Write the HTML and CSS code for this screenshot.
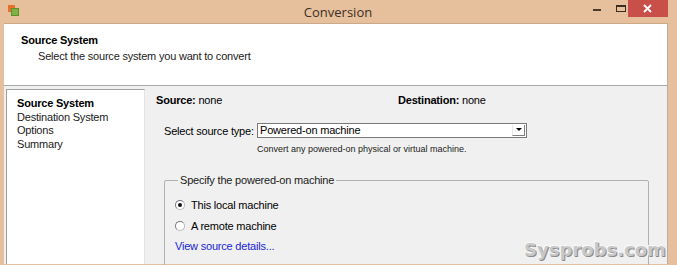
FILE: index.html
```html
<!DOCTYPE html>
<html lang="en">
<head>
    <meta charset="UTF-8">
    <title>Conversion</title>
    <link rel="stylesheet" href="styles.css">
</head>
<body>

<div class="window">
    <div class="titlebar">
        <div class="app-icon"><span class="sq-a"></span><span class="sq-b"></span></div>
        <div class="title">Conversion</div>
        <div class="controls">
            <svg class="caption-buttons" width="84" height="17" viewBox="0 0 84 17">
                <rect x="9" y="9" width="8" height="2" fill="#4a3a2c"/>
                <rect x="32.5" y="5.5" width="9" height="6" fill="none" stroke="#3b2c20" stroke-width="1"/>
                <rect x="32" y="5" width="10" height="2" fill="#3b2c20"/>
                <rect x="44" y="0" width="40" height="17" fill="#c94f4a"/>
                <path d="M60 5 L67 12 M67 5 L60 12" stroke="#ffffff" stroke-width="1.8" fill="none"/>
            </svg>
        </div>
    </div>

    <div class="client">
        <div class="header">
            <h1>Source System</h1>
            <p>Select the source system you want to convert</p>
        </div>

        <div class="main">
            <ul class="steps">
                <li class="current">Source System</li>
                <li>Destination System</li>
                <li>Options</li>
                <li>Summary</li>
            </ul>

            <div class="content">
                <div class="summary-row">
                    <span class="src"><b>Source:</b> none</span>
                    <span class="dst"><b>Destination:</b> none</span>
                </div>

                <div class="type-row">
                    <label for="source_type">Select source type:</label>
                    <div class="combo">
                        <span class="combo-value">Powered-on machine</span>
                        <span class="combo-arrow"></span>
                    </div>
                </div>
                <div class="hint">Convert any powered-on physical or virtual machine.</div>

                <fieldset class="machine">
                    <legend>Specify the powered-on machine</legend>
                    <div class="radio-row"><span class="radio checked"></span>This local machine</div>
                    <div class="radio-row"><span class="radio"></span>A remote machine</div>
                    <a href="#" class="details-link">View source details...</a>
                </fieldset>
            </div>
        </div>
    </div>

    <div class="watermark">Sysprobs.com</div>
</div>

</body>
</html>
```

FILE: styles.css
```css
body {
    margin: 0;
    padding: 0;
    font-family: Tahoma, "Liberation Sans", Arial, sans-serif;
    font-size: 11px;
    letter-spacing: -0.2px;
    color: #000;
    overflow: hidden;
}

.window {
    position: relative;
    width: 677px;
    height: 265px;
    overflow: hidden;
    background-color: #e6bf9c;
    padding: 0 9px 0 4px;
    box-sizing: border-box;
}

.titlebar {
    height: 23px;
    display: flex;
    align-items: flex-start;
}

.app-icon {
    position: relative;
    flex: 0 0 11px;
    height: 11px;
    margin: 5px 0 0 4px;
}

.sq-a {
    position: absolute;
    left: 0;
    top: 0;
    width: 7px;
    height: 7px;
    background: #e8702a;
}

.sq-b {
    position: absolute;
    left: 3px;
    top: 3px;
    width: 8px;
    height: 8px;
    background: #7cb342;
    border: 1px solid #5a8f2a;
    box-sizing: border-box;
}

.title {
    flex: 1;
    padding: 3px 0 0 73px;
    text-align: center;
    font-family: "Open Sans", "Liberation Sans", sans-serif;
    font-size: 13px;
    letter-spacing: 0;
    color: #3c3024;
}

.controls {
    flex: 0 0 84px;
    height: 17px;
}

.caption-buttons {
    display: block;
}

.client {
    border-top: 1px solid #c9a98a;
    border-right: 1px solid #b8b0a8;
}

.header {
    background-color: #fff;
    height: 62px;
    border-bottom: 1px solid #a8a8a8;
    box-sizing: border-box;
    padding: 10px 0 0 17px;
}

.header h1 {
    font-size: 11px;
    font-weight: bold;
    margin: 0;
    line-height: 13px;
}

.header p {
    margin: 3px 0 0 17px;
    line-height: 13px;
    color: #222;
}

.main {
    background-color: #f0f0f0;
    height: 178px;
    display: flex;
    padding: 3px 0 0 2px;
    box-sizing: border-box;
}

.steps {
    list-style: none;
    margin: 0;
    padding: 7px 0 0 10px;
    width: 139px;
    box-sizing: border-box;
    background-color: #fff;
    border-top: 1px solid #a0a0a0;
    border-left: 1px solid #a0a0a0;
    border-right: 1px solid #e3e3e3;
}

.steps li {
    line-height: 13.5px;
    color: #1a1a1a;
    white-space: nowrap;
}

.steps li.current {
    font-weight: bold;
    color: #000;
}

.content {
    flex: 1;
    padding: 5px 0 0 11px;
}

.summary-row {
    line-height: 13px;
    height: 13px;
    display: flex;
}

.summary-row .src {
    width: 242px;
}

.type-row {
    display: flex;
    align-items: center;
    margin: 16px 0 0 8px;
}

.type-row label {
    width: 93px;
    flex-shrink: 0;
    white-space: nowrap;
}

.combo {
    width: 270px;
    height: 15px;
    background: #fff;
    border: 1px solid #7a7a7a;
    box-sizing: border-box;
    display: flex;
    align-items: center;
}

.combo-value {
    flex: 1;
    padding-left: 2px;
    line-height: 13px;
}

.combo-arrow {
    width: 13px;
    height: 11px;
    margin-right: 1px;
    border-left: 1px solid #e8e8e8;
    border-right: 1px solid #808080;
    border-bottom: 1px solid #808080;
    box-sizing: border-box;
    position: relative;
}

.combo-arrow::after {
    content: "";
    position: absolute;
    left: 3px;
    top: 3px;
    border-left: 3px solid transparent;
    border-right: 3px solid transparent;
    border-top: 3px solid #000;
}

.hint {
    font-size: 9px;
    letter-spacing: 0;
    margin: 6px 0 0 101px;
    line-height: 11px;
    color: #222;
}

.machine {
    margin: 19px 0 0 8px;
    width: 485px;
    height: 110px;
    box-sizing: border-box;
    border: 1px solid #b0b0b0;
    border-radius: 2px;
    padding: 12px 0 0 10px;
}

.machine legend {
    padding: 0 2px;
    margin-left: 3px;
    color: #1a1a1a;
}

.radio-row {
    display: flex;
    align-items: center;
    height: 13px;
    margin-bottom: 8px;
}

.radio {
    flex-shrink: 0;
    width: 8px;
    height: 8px;
    border-radius: 50%;
    border: 1px solid #b8b8b8;
    border-top-color: #777;
    border-left-color: #777;
    background: #fff;
    margin-right: 6px;
    position: relative;
}

.radio.checked::after {
    content: "";
    position: absolute;
    left: 2px;
    top: 2px;
    width: 4px;
    height: 4px;
    border-radius: 50%;
    background: #111;
}

.details-link {
    display: block;
    color: #1a24d6;
    text-decoration: none;
    margin-top: 1px;
}

.watermark {
    position: absolute;
    left: 524px;
    top: 239px;
    font-family: "DejaVu Sans", sans-serif;
    font-weight: bold;
    font-size: 18px;
    letter-spacing: 0;
    color: #c8c8c8;
    text-shadow: 1px 1px 0 #8a8a8a, -1px -1px 0 #fafafa;
}
```
